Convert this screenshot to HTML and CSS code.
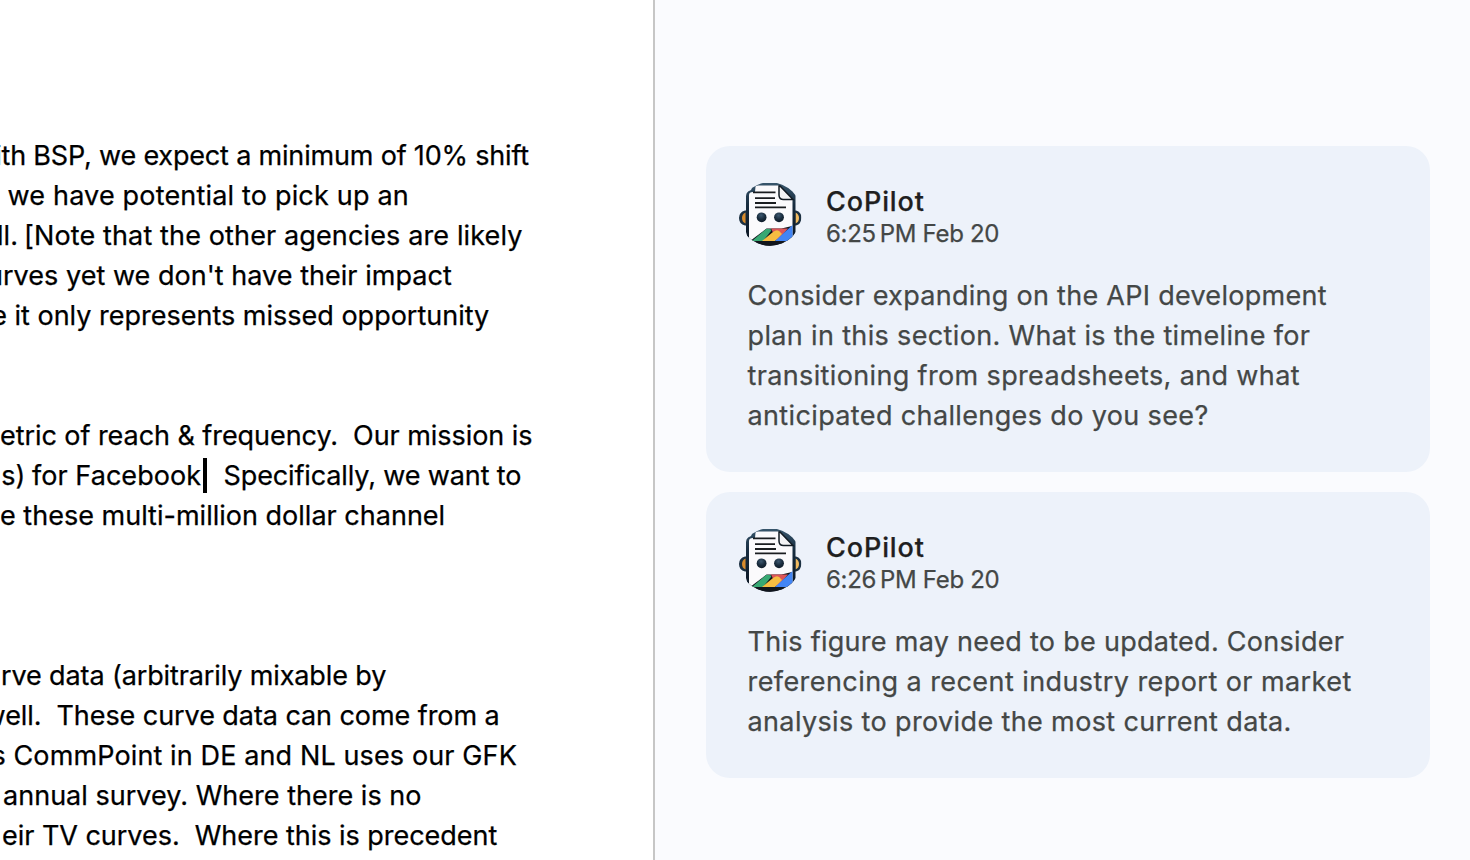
FILE: index.html
```html
<!DOCTYPE html>
<html lang="en">
<head>
<meta charset="utf-8">
<title>Document comments</title>
<link rel="stylesheet" href="styles.css">
</head>
<body>
<svg width="0" height="0" class="defs" aria-hidden="true">
  <defs>
    <linearGradient id="shell" x1="0" y1="0" x2="0" y2="1"><stop offset="0" stop-color="#38566c"/><stop offset=".35" stop-color="#172c3f"/><stop offset="1" stop-color="#0a1420"/></linearGradient>
    <linearGradient id="ear" x1="0" y1="0" x2="1" y2="0"><stop offset="0" stop-color="#d88a2a"/><stop offset="1" stop-color="#f3bd62"/></linearGradient>
    <radialGradient id="eye" cx=".45" cy=".3" r=".7"><stop offset="0" stop-color="#3d5870"/><stop offset=".6" stop-color="#192b3c"/><stop offset="1" stop-color="#101d2a"/></radialGradient>
    <clipPath id="round"><circle cx="32" cy="32" r="31.7"/></clipPath>
    <symbol id="robot" viewBox="0 0 64 64">
      <g clip-path="url(#round)">
        <path d="M10 28.500H7Q1 30 1 36t6 7.500h3zM55 28.500h3q5.500 1.500 5.500 7.500t-5.500 7.500h-3z" fill="#1d3142"/>
        <path d="M7.500 30.500q-3.500 1.500-3.500 5.500t3.500 5.500zM57.500 30.500q3.500 1.500 3.500 5.500t-3.500 5.500z" fill="url(#ear)"/>
        <path d="M19 1h26q2 0 4 1.600l6 5q2.500 2 2.500 5V50Q55 59 44 64H20Q9 58 8 50V14q0-3 2-4.500l3-1.500 2-4.500Q17 1 19 1z" fill="url(#shell)"/>
        <path d="M17.500 4.500q1-1 3-1H41l13.500 13.500v39q0 4-4 4H14q-3 0-3-3V13q0-3 4-3h2z" fill="#fbfafc"/>
        <path d="M15 10.300h22.500M17 16.200h20M17 21h21M17 25.300h31" fill="none" stroke="#1b1d20" stroke-width="1.800"/>
        <path d="M41 4v9q0 4.500 4.500 4.500H55L42 4z" fill="#f3f3f5" stroke="#111a22" stroke-width="1.500"/>
        <path d="M11 60l5-4 12.500-9.500h15L54 44v20H11z" fill="#10151c"/>
        <path d="M33 46.500h17L39 59z" fill="#dc5558"/>
        <path d="M14 59l14-12h3q3 0 2 2L25 59z" fill="#38a873"/>
        <path d="M24 59l11-9q5-4 8 1l1 1-7 7z" fill="#f6bd42"/>
        <path d="M37 59l17.500-16v13q0 3-4 3z" fill="#4285f4"/>
        <circle cx="23.600" cy="35.300" r="4.900" fill="url(#eye)"/>
        <circle cx="41" cy="35.300" r="4.900" fill="url(#eye)"/>
      </g>
    </symbol>
  </defs>
</svg>
<div class="app">
  <main class="doc">
    <p>
      <span class="line a1"><span class="cut">i</span><span>th BSP, we expect a minimum of 10% shift</span></span>
      <span class="line a2"><span class="cut">. </span><span>we have potential to pick up an</span></span>
      <span class="line a3"><span class="cut">ll. </span><span>[Note that the other agencies are likely</span></span>
      <span class="line a4"><span class="cut">u</span><span>rves yet we don't have their impact</span></span>
      <span class="line a5"><span class="cut">e </span><span>it only represents missed opportunity</span></span>
    </p>
    <p>
      <span class="line b1"><span>etric of reach &amp; frequency.  Our mission is</span></span>
      <span class="line b2"><span class="cut">ns) </span><span>for Facebook</span><span class="caret"></span><span class="after">Specifically, we want to</span></span>
      <span class="line b3"><span>e these multi-million dollar channel</span></span>
    </p>
    <p>
      <span class="line c1"><span class="cut"></span><span>rve data (arbitrarily mixable by</span></span>
      <span class="line c2"><span class="cut">well.  </span><span>These curve data can come from a</span></span>
      <span class="line c3"><span class="cut">s </span><span>CommPoint in DE and NL uses our GFK</span></span>
      <span class="line c4"><span class="cut"> </span><span>annual survey. Where there is no</span></span>
      <span class="line c5"><span class="cut"></span><span>eir TV curves.  Where this is precedent</span></span>
    </p>
  </main>
  <aside class="comments">
    <article class="card">
      <header>
        <svg class="avatar"><use href="#robot"/></svg>
        <div class="meta"><div class="name">CoPilot</div><div class="time">6:25&#8239;PM Feb 20</div></div>
      </header>
      <div class="text">
        <div class="d1">Consider expanding on the API development</div>
        <div class="d2">plan in this section. What is the timeline for</div>
        <div class="d3">transitioning from spreadsheets, and what</div>
        <div class="d4">anticipated challenges do you see?</div>
      </div>
    </article>
    <article class="card">
      <header>
        <svg class="avatar"><use href="#robot"/></svg>
        <div class="meta"><div class="name">CoPilot</div><div class="time">6:26&#8239;PM Feb 20</div></div>
      </header>
      <div class="text">
        <div class="e1">This figure may need to be updated. Consider</div>
        <div class="e2">referencing a recent industry report or market</div>
        <div class="e3">analysis to provide the most current data.</div>
      </div>
    </article>
  </aside>
</div>
</body>
</html>
```
FILE: styles.css
```css
* { box-sizing: border-box; }
body { margin: 0; background: #fff; font-family: Inter, "Liberation Sans", sans-serif; overflow: hidden; }
.defs { position: absolute; }
.app { display: flex; width: 1470px; height: 860px; overflow: hidden; }

.doc {
  width: 655px;
  flex: none;
  padding-top: 136px;
  border-right: 2px solid #c6c6c6;
  display: flex;
  flex-direction: column;
  gap: 80px;
  color: #000;
  font-size: 27px;
  line-height: 40px;
  overflow: hidden;
  -webkit-text-stroke: .25px;
}
.doc p { margin: 0; flex: none; }
.doc p:last-child { margin-top: 40px; }
.line { display: flex; height: 40px; white-space: pre; }
.cut { display: flex; justify-content: flex-end; flex: none; }
.caret { width: 4px; height: 35px; margin: 2px 17px 0 1px; background: #000; flex: none; }

.a1 { letter-spacing: -.18px; }
.a1 .cut { width: 1.500px; }
.a2 { letter-spacing: .18px; }
.a2 .cut { width: 7.500px; }
.a3 { letter-spacing: .13px; }
.a3 .cut { width: 24px; }
.a3 .cut { word-spacing: -1.500px; letter-spacing: 0; }
.a4 { letter-spacing: .03px; }
.a4 .cut { width: 3px; }
.a5 { letter-spacing: 0; }
.a5 .cut { width: 14.500px; }
.b1 { letter-spacing: -.06px; }
.b2 { letter-spacing: .05px; }
.b2 .cut { width: 32px; word-spacing: -1px; }
.b2 .caret { margin-left: 1.500px; }
.b2 .after { letter-spacing: -.13px; }
.b3 { letter-spacing: .01px; }
.c1 { letter-spacing: -.12px; }
.c1 .cut { width: 1px; }
.c2 { letter-spacing: -.07px; }
.c2 .cut { width: 56.500px; }
.c3 { letter-spacing: .12px; }
.c3 .cut { width: 13.500px; }
.c4 { letter-spacing: .02px; }
.c4 .cut { width: 3px; }
.c5 { letter-spacing: -.03px; }
.c5 .cut { width: 2px; }

.comments {
  flex: 1;
  padding: 146px 40px 0 51px;
  background: #fafbfe;
  display: flex;
  flex-direction: column;
  gap: 20px;
  -webkit-text-stroke: .25px;
}
.card { padding: 36px 30px 36px 32px; border-radius: 24px; background: #edf2fa; }
.card header { display: flex; gap: 24px; height: 67px; }
.avatar { width: 64px; height: 64px; flex: none; }
.meta { padding-top: 4px; line-height: 32px; }
.name { color: #1f1f1f; font-size: 27px; font-weight: 500; letter-spacing: .9px; }
.time { color: #444746; font-size: 24px; letter-spacing: -.32px; white-space: pre; }
.text { margin: 27px 0 0 9.500px; color: #444746; font-size: 27px; line-height: 40px; white-space: nowrap; }
.d1 { letter-spacing: .28px; }
.d2 { letter-spacing: .35px; }
.d3 { letter-spacing: .36px; }
.d4 { letter-spacing: .37px; }
.e1 { letter-spacing: .28px; }
.e2 { letter-spacing: .43px; }
.e3 { letter-spacing: .37px; }
```
